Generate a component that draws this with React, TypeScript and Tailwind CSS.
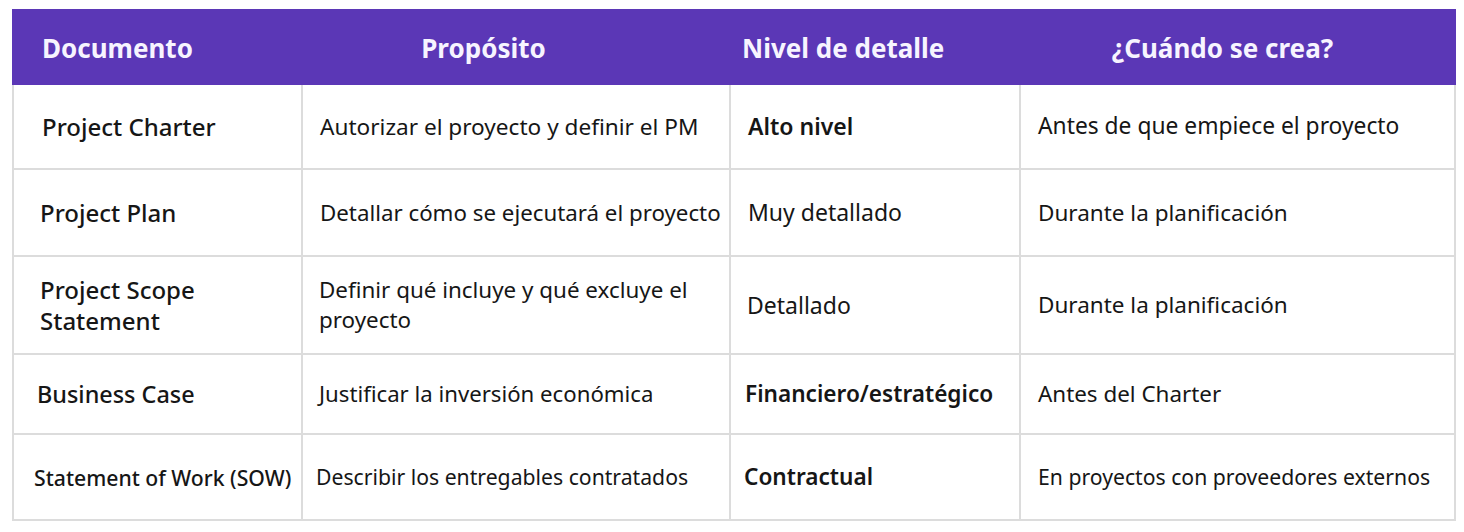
import React from "react";

type Row = {
  doc: React.ReactNode;
  purpose: React.ReactNode;
  level: string;
  levelBold?: boolean;
  when: string;
  h: string;
  docCls: string;
  purposeCls: string;
  levelCls: string;
  whenCls: string;
};

const rows: Row[] = [
  {
    doc: "Project Charter",
    purpose: "Autorizar el proyecto y definir el PM",
    level: "Alto nivel",
    levelBold: true,
    when: "Antes de que empiece el proyecto",
    h: "h-[83px]",
    docCls: "pl-[28px] text-[24px]",
    purposeCls: "pl-[17px] text-[22.6px]",
    levelCls: "pl-[17px] text-[23px]",
    whenCls: "text-[22.8px]",
  },
  {
    doc: "Project Plan",
    purpose: "Detallar cómo se ejecutará el proyecto",
    level: "Muy detallado",
    when: "Durante la planificación",
    h: "h-[87px]",
    docCls: "pl-[26px] text-[24px]",
    purposeCls: "pl-[17px] text-[22.3px]",
    levelCls: "pl-[17px] text-[23px]",
    whenCls: "text-[22.5px]",
  },
  {
    doc: (
      <>
        Project Scope
        <br />
        Statement
      </>
    ),
    purpose: (
      <>
        Definir qué incluye y qué excluye el
        <br />
        proyecto
      </>
    ),
    level: "Detallado",
    when: "Durante la planificación",
    h: "h-[98px]",
    docCls: "pl-[26px] text-[24px]",
    purposeCls: "pl-[16px] text-[22.4px]",
    levelCls: "pl-[16px] text-[23px]",
    whenCls: "text-[22.5px]",
  },
  {
    doc: "Business Case",
    purpose: "Justificar la inversión económica",
    level: "Financiero/estratégico",
    levelBold: true,
    when: "Antes del Charter",
    h: "h-[80px]",
    docCls: "pl-[23px] text-[23.4px]",
    purposeCls: "pl-[16px] text-[22.2px]",
    levelCls: "pl-[14px] text-[22.6px]",
    whenCls: "text-[22.4px]",
  },
  {
    doc: "Statement of Work (SOW)",
    purpose: "Describir los entregables contratados",
    level: "Contractual",
    levelBold: true,
    when: "En proyectos con proveedores externos",
    h: "h-[86px]",
    docCls: "pl-[20px] text-[21.2px]",
    purposeCls: "pl-[13px] text-[21.2px]",
    levelCls: "pl-[13px] text-[22.6px]",
    whenCls: "text-[21.2px]",
  },
];

export default function App() {
  return (
    <div
      className="w-[1464px] h-[532px] bg-white pt-[9px] pl-[12px]"
      style={{ fontFamily: '"Noto Sans", "Open Sans", sans-serif' }}
    >
      <div className="w-[1444px] border-2 border-[#dcdcdc] border-t-[#e4e0ee]">
        {/* header */}
        <div className="grid grid-cols-[289px_428px_290px_1fr] h-[76px] pt-[3px] bg-[#5b37b6] text-[#f7f4ff] font-bold text-[26px] -mx-[2px] -mt-[2px]">
          <div className="flex items-center pl-[30px]">Documento</div>
          <div className="flex items-center justify-center pr-[63px]">Propósito</div>
          <div className="flex items-center pl-[13px]">Nivel de detalle</div>
          <div className="flex items-center justify-center pr-[30px]">¿Cuándo se crea?</div>
        </div>
        {rows.map((r, i) => (
          <div
            key={i}
            className={`grid grid-cols-[287px_428px_290px_1fr] ${r.h} text-[#161616] ${
              i > 0 ? "border-t-2 border-[#dcdcdc]" : ""
            }`}
          >
            <div className={`flex items-center ${r.docCls} font-medium leading-[31px]`}>
              <span>{r.doc}</span>
            </div>
            <div
              className={`flex items-center ${r.purposeCls} border-l-2 border-[#dcdcdc] leading-[30px]`}
            >
              <span>{r.purpose}</span>
            </div>
            <div
              className={`flex items-center ${r.levelCls} border-l-2 border-[#dcdcdc] ${
                r.levelBold ? "font-semibold" : ""
              }`}
            >
              {r.level}
            </div>
            <div
              className={`flex items-center pl-[17px] border-l-2 border-[#dcdcdc] ${r.whenCls}`}
            >
              {r.when}
            </div>
          </div>
        ))}
      </div>
    </div>
  );
}
